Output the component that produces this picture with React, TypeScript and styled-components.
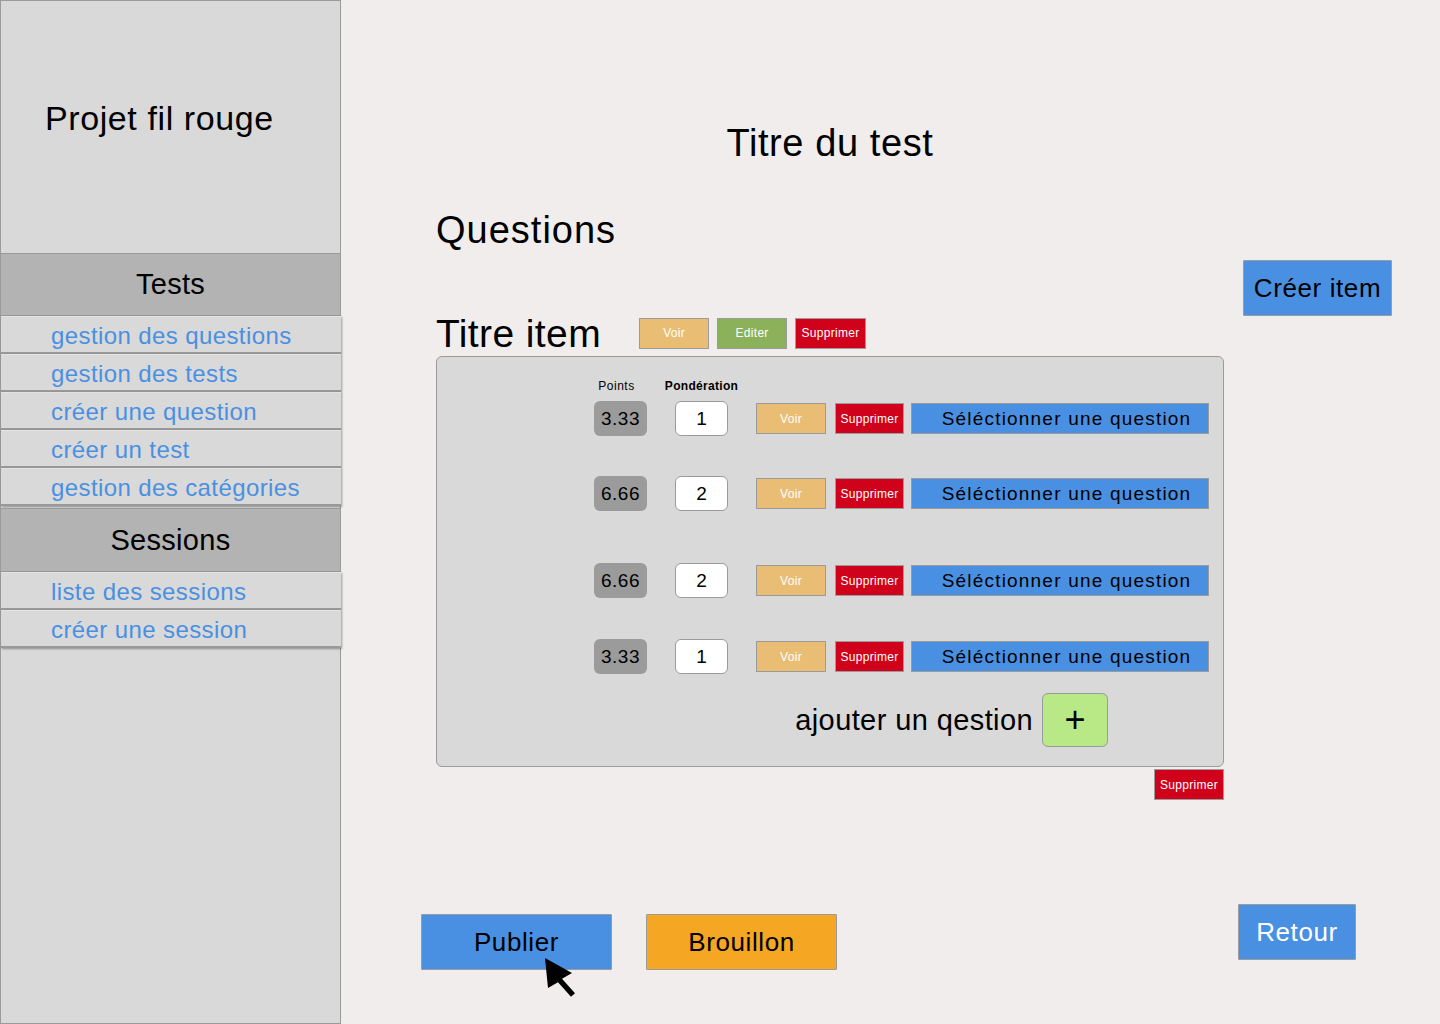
import React, { FunctionComponent } from 'react';
import styled, { createGlobalStyle } from 'styled-components';

const PageBody = createGlobalStyle`
  body {
    margin: 0;
    background: #f0edec;
    font-family: 'Liberation Sans', Arial, sans-serif;
    color: #000;
  }
`;

const Page = styled.div`
    display: flex;
    min-height: 1024px;
`;

const Sidebar = styled.nav`
    width: 341px;
    flex-shrink: 0;
    box-sizing: border-box;
    background: #d9d9d9;
    border: 1px solid #9b9b9b;
    display: flex;
    flex-direction: column;
`;

const Brand = styled.div`
    height: 252px;
    box-sizing: border-box;
    padding: 95px 0 0 44px;
    font-size: 34px;
    line-height: 44px;
    letter-spacing: 0.6px;
`;

const SectionHeader = styled.div<{ $gap?: number; $h?: number }>`
    height: ${(p) => p.$h || 63}px;
    box-sizing: border-box;
    margin-top: ${(p) => p.$gap || 0}px;
    background: #b3b3b3;
    border-top: 1px solid #9b9b9b;
    border-bottom: 1px solid #9b9b9b;
    display: flex;
    align-items: center;
    justify-content: center;
    font-size: 29px;
    letter-spacing: 0.3px;
`;

const NavItem = styled.a`
    display: block;
    height: 38px;
    box-sizing: border-box;
    margin-right: -1px;
    padding: 3px 0 0 50px;
    background: #d9d9d9;
    border-top: 1px solid #e4e4e4;
    border-bottom: 2px solid #999;
    box-shadow: 1px 1px 2px rgba(0, 0, 0, 0.35);
    color: #4a90e2;
    font-size: 24px;
    line-height: 32px;
    letter-spacing: 0.4px;
    text-decoration: none;
`;

const Main = styled.main`
    flex: 1;
    padding: 120px 0 0 95px;
    display: flex;
    flex-direction: column;
`;

const Column = styled.div`
    width: 788px;
`;

const PageTitle = styled.h1`
    margin: 0;
    width: 788px;
    text-align: center;
    font-weight: normal;
    font-size: 38px;
    line-height: 46px;
    letter-spacing: 0.6px;
`;

const Heading = styled.h2`
    margin: 41px 0 0;
    font-weight: normal;
    font-size: 38px;
    line-height: 46px;
    letter-spacing: 1px;
`;

const ActionRow = styled.div`
    width: 956px;
    margin-top: 7px;
    display: flex;
    justify-content: flex-end;
`;

const Button = styled.button<{ $bg: string; $w: number; $h: number; $light?: boolean }>`
    position: relative;
    width: ${(p) => p.$w}px;
    height: ${(p) => p.$h}px;
    padding: 0;
    flex-shrink: 0;
    background: ${(p) => p.$bg};
    border: 1px solid #9b9b9b;
    border-radius: 1px;
    color: ${(p) => (p.$light ? '#fff' : '#000')};
    font-family: inherit;
    font-size: 26px;
    letter-spacing: 0.6px;
    cursor: pointer;
`;

const SmallButton = styled.button<{ $bg: string; $w?: number }>`
    width: ${(p) => p.$w || 70}px;
    height: 31px;
    padding: 0;
    flex-shrink: 0;
    background: ${(p) => p.$bg};
    border: 1px solid #9b9b9b;
    color: #fff;
    font-family: inherit;
    font-size: 12px;
    letter-spacing: 0.3px;
    cursor: pointer;
`;

const ItemHeader = styled.div`
    height: 36px;
    display: flex;
    align-items: center;
`;

const ItemTitle = styled.h3`
    margin: 0 38px 0 0;
    font-weight: normal;
    font-size: 39px;
    line-height: 36px;
    letter-spacing: 0.4px;
`;

const ItemActions = styled.div`
    display: flex;
    gap: 8px;
    margin-top: -2px;
`;

const Panel = styled.section`
    box-sizing: border-box;
    width: 788px;
    height: 411px;
    margin-top: 4px;
    padding: 22px 0 0 157px;
    background: #d9d9d9;
    border: 1px solid #9b9b9b;
    border-radius: 6px;
`;

const QuestionRow = styled.div<{ $top?: number }>`
    display: flex;
    align-items: center;
    margin-top: ${(p) => p.$top || 0}px;
    & > :nth-child(2),
    & > :nth-child(3) {
        margin-left: 28px;
    }
    & > :nth-child(4) {
        margin-left: 9px;
    }
    & > :nth-child(5) {
        margin-left: 7px;
    }
`;

const ColLabel = styled.div<{ $bold?: boolean }>`
    width: 53px;
    display: flex;
    justify-content: center;
    font-size: 12px;
    line-height: 15px;
    white-space: nowrap;
    font-weight: ${(p) => (p.$bold ? 'bold' : 'normal')};
    letter-spacing: ${(p) => (p.$bold ? '0.3px' : '0.5px')};
    transform: translateX(${(p) => (p.$bold ? '0' : '-4px')});
`;

const Score = styled.div`
    width: 53px;
    height: 35px;
    border-radius: 6px;
    background: #9b9b9b;
    display: flex;
    align-items: center;
    justify-content: center;
    font-size: 19px;
    letter-spacing: 0.5px;
`;

const Weight = styled.div`
    width: 53px;
    height: 35px;
    box-sizing: border-box;
    border: 1px solid #9b9b9b;
    border-radius: 6px;
    background: #fff;
    display: flex;
    align-items: center;
    justify-content: center;
    font-size: 19px;
`;

const SelectButton = styled.button`
    width: 298px;
    height: 31px;
    padding: 0 0 0 13px;
    flex-shrink: 0;
    background: #4a90e2;
    border: 1px solid #9b9b9b;
    color: #000;
    font-family: inherit;
    font-size: 19px;
    letter-spacing: 1.2px;
    cursor: pointer;
`;

const AddRow = styled.div`
    margin-top: 19px;
    padding-right: 115px;
    display: flex;
    align-items: center;
    justify-content: flex-end;
    gap: 9px;
    font-size: 29px;
    letter-spacing: 0.4px;
`;

const PlusButton = styled.button`
    width: 66px;
    height: 54px;
    padding: 0;
    background: #b8e986;
    border: 1px solid #9b9b9b;
    border-radius: 6px;
    font-family: inherit;
    font-size: 36px;
    line-height: 1;
    color: #000;
    cursor: pointer;
`;

const BelowPanel = styled.div`
    width: 788px;
    margin-top: 2px;
    display: flex;
    justify-content: flex-end;
`;

const Footer = styled.div`
    display: flex;
    align-items: flex-start;
    margin: 104px 0 0 -15px;
`;

const Pointer = styled.svg`
    position: absolute;
    left: 123px;
    top: 43px;
    width: 32px;
    height: 40px;
    overflow: visible;
`;

const rows = [
    { points: '3.33', weight: '1', top: 7 },
    { points: '6.66', weight: '2', top: 40 },
    { points: '6.66', weight: '2', top: 52 },
    { points: '3.33', weight: '1', top: 41 },
];

const App: FunctionComponent = () => {
    return (
        <>
            <PageBody />
            <Page>
                <Sidebar>
                    <Brand>Projet fil rouge</Brand>
                    <SectionHeader>Tests</SectionHeader>
                    <NavItem href="#">gestion des questions</NavItem>
                    <NavItem href="#">gestion des tests</NavItem>
                    <NavItem href="#">créer une question</NavItem>
                    <NavItem href="#">créer un test</NavItem>
                    <NavItem href="#">gestion des catégories</NavItem>
                    <SectionHeader $gap={2} $h={64}>Sessions</SectionHeader>
                    <NavItem href="#">liste des sessions</NavItem>
                    <NavItem href="#">créer une session</NavItem>
                </Sidebar>
                <Main>
                    <PageTitle>Titre du test</PageTitle>
                    <Heading>Questions</Heading>
                    <ActionRow>
                        <Button $bg="#4a90e2" $w={149} $h={56}>Créer item</Button>
                    </ActionRow>
                    <Column>
                        <ItemHeader>
                            <ItemTitle>Titre item</ItemTitle>
                            <ItemActions>
                                <SmallButton $bg="#e9be74">Voir</SmallButton>
                                <SmallButton $bg="#8bb25a">Editer</SmallButton>
                                <SmallButton $bg="#d0021b" $w={71}>Supprimer</SmallButton>
                            </ItemActions>
                        </ItemHeader>
                        <Panel>
                            <QuestionRow>
                                <ColLabel>Points</ColLabel>
                                <ColLabel $bold>Pondération</ColLabel>
                            </QuestionRow>
                            {rows.map((row, i) => (
                                <QuestionRow key={i} $top={row.top}>
                                    <Score>{row.points}</Score>
                                    <Weight>{row.weight}</Weight>
                                    <SmallButton $bg="#e9be74">Voir</SmallButton>
                                    <SmallButton $bg="#d0021b" $w={69}>Supprimer</SmallButton>
                                    <SelectButton>Séléctionner une question</SelectButton>
                                </QuestionRow>
                            ))}
                            <AddRow>
                                ajouter un qestion
                                <PlusButton>+</PlusButton>
                            </AddRow>
                        </Panel>
                        <BelowPanel>
                            <SmallButton $bg="#d0021b">Supprimer</SmallButton>
                        </BelowPanel>
                    </Column>
                    <Footer>
                        <Button $bg="#4a90e2" $w={191} $h={56} style={{ marginTop: 10 }}>
                            Publier
                            <Pointer viewBox="0 0 32 40">
                                <polygon
                                    points="0,0 27,15 17,20.7 30,35.2 26,38.8 13,24.3 3,30"
                                    fill="#000"
                                />
                            </Pointer>
                        </Button>
                        <Button $bg="#f5a623" $w={191} $h={56} style={{ marginLeft: 34, marginTop: 10 }}>
                            Brouillon
                        </Button>
                        <Button $bg="#4a90e2" $w={118} $h={56} $light style={{ marginLeft: 401 }}>
                            Retour
                        </Button>
                    </Footer>
                </Main>
            </Page>
        </>
    );
};

export default App;
